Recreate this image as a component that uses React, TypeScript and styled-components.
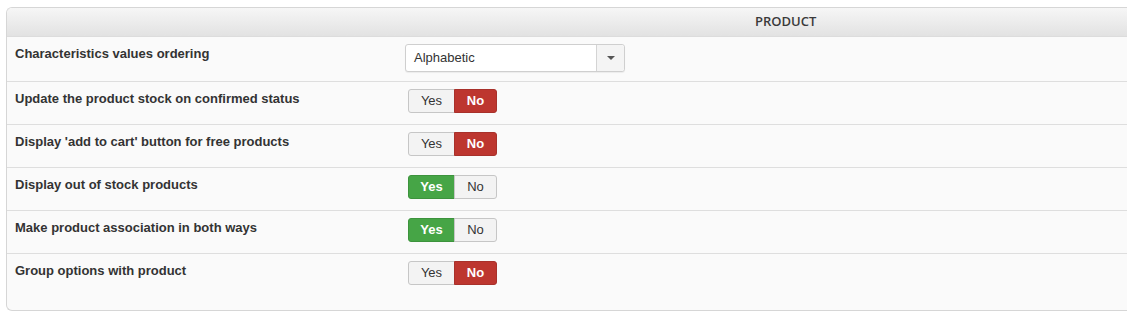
import styled, { createGlobalStyle } from "styled-components";

const GlobalStyle = createGlobalStyle`
  body {
    margin: 0;
    background: #fff;
    font-family: "Liberation Sans", Arial, sans-serif;
    overflow: hidden;
  }
`;

type Choice = "yes" | "no";

const rows: { label: string; value: Choice }[] = [
  { label: "Update the product stock on confirmed status", value: "no" },
  { label: "Display 'add to cart' button for free products", value: "no" },
  { label: "Display out of stock products", value: "yes" },
  { label: "Make product association in both ways", value: "yes" },
  { label: "Group options with product", value: "no" },
];

const App = () => {
  return (
    <>
      <GlobalStyle />
      <Page>
        <Panel>
          <Header>PRODUCT</Header>
          <Row $first>
            <Label>Characteristics values ordering</Label>
            <Field>
              <Select>
                <SelectValue>Alphabetic</SelectValue>
                <SelectArrow>
                  <Caret />
                </SelectArrow>
              </Select>
            </Field>
          </Row>
          {rows.map((row, i) => (
            <Row key={row.label} $last={i === rows.length - 1}>
              <Label>{row.label}</Label>
              <Field $toggle>
                <Toggle>
                  <ToggleButton $active={row.value === "yes"} $tone="yes">
                    Yes
                  </ToggleButton>
                  <ToggleButton $active={row.value === "no"} $tone="no">
                    No
                  </ToggleButton>
                </Toggle>
              </Field>
            </Row>
          ))}
        </Panel>
      </Page>
    </>
  );
};

export default App;

const Page = styled.div`
  padding: 7px 0 0 6px;
`;

const Panel = styled.div`
  background: #fafafa;
  border: 1px solid #d6d6d6;
  border-right: none;
  border-radius: 6px 0 0 6px;
  overflow: hidden;
`;

const Header = styled.div`
  height: 28px;
  line-height: 27px;
  border-bottom: 1px solid #dcdcdc;
  background: linear-gradient(to bottom, #f6f6f6, #e2e2e2);
  padding-left: 748px;
  font-family: "Open Sans", "Liberation Sans", sans-serif;
  font-size: 13px;
  font-weight: 600;
  color: #3a3a3a;
`;

const Row = styled.div<{ $first?: boolean; $last?: boolean }>`
  display: grid;
  grid-template-columns: 398px 1fr;
  height: ${({ $first, $last }) => ($last ? "56px" : $first ? "44px" : "42px")};
  border-bottom: ${({ $last }) => ($last ? "none" : "1px solid #dedede")};
`;

const Label = styled.div`
  padding: 9px 0 0 8px;
  font-size: 13px;
  font-weight: bold;
  color: #333;
`;

const Field = styled.div<{ $toggle?: boolean }>`
  padding-top: 7px;
  padding-left: ${({ $toggle }) => ($toggle ? "3px" : "0")};
`;

const Select = styled.div`
  display: flex;
  width: 218px;
  height: 26px;
  border: 1px solid #cfcfcf;
  border-radius: 3px;
  background: #fff;
  box-shadow: 0 1px 1px rgba(0, 0, 0, 0.06);
`;

const SelectValue = styled.div`
  flex: 1;
  padding-left: 8px;
  line-height: 26px;
  font-size: 13px;
  color: #333;
`;

const SelectArrow = styled.div`
  width: 27px;
  border-left: 1px solid #d4d4d4;
  background: #f4f4f4;
  border-radius: 0 3px 3px 0;
  display: flex;
  align-items: center;
  justify-content: center;
`;

const Caret = styled.span`
  width: 0;
  height: 0;
  border-left: 4px solid transparent;
  border-right: 4px solid transparent;
  border-top: 4px solid #555;
`;

const Toggle = styled.div`
  display: inline-flex;
  height: 24px;
`;

const ToggleButton = styled.div<{ $active: boolean; $tone: Choice }>`
  box-sizing: border-box;
  height: 24px;
  line-height: 22px;
  font-size: 13px;
  text-align: center;
  width: ${({ $tone }) => ($tone === "yes" ? "47px" : "43px")};
  border: 1px solid
    ${({ $active, $tone }) =>
      !$active ? "#c6c6c6" : $tone === "yes" ? "#3d933d" : "#a8312b"};
  border-radius: ${({ $tone }) => ($tone === "yes" ? "3px 0 0 3px" : "0 3px 3px 0")};
  ${({ $tone }) => ($tone === "no" ? "margin-left: -1px;" : "")}
  background: ${({ $active, $tone }) =>
    !$active ? "#f3f3f3" : $tone === "yes" ? "#46a546" : "#bd362f"};
  color: ${({ $active }) => ($active ? "#fff" : "#333")};
  font-weight: ${({ $active }) => ($active ? "bold" : "normal")};
`;
